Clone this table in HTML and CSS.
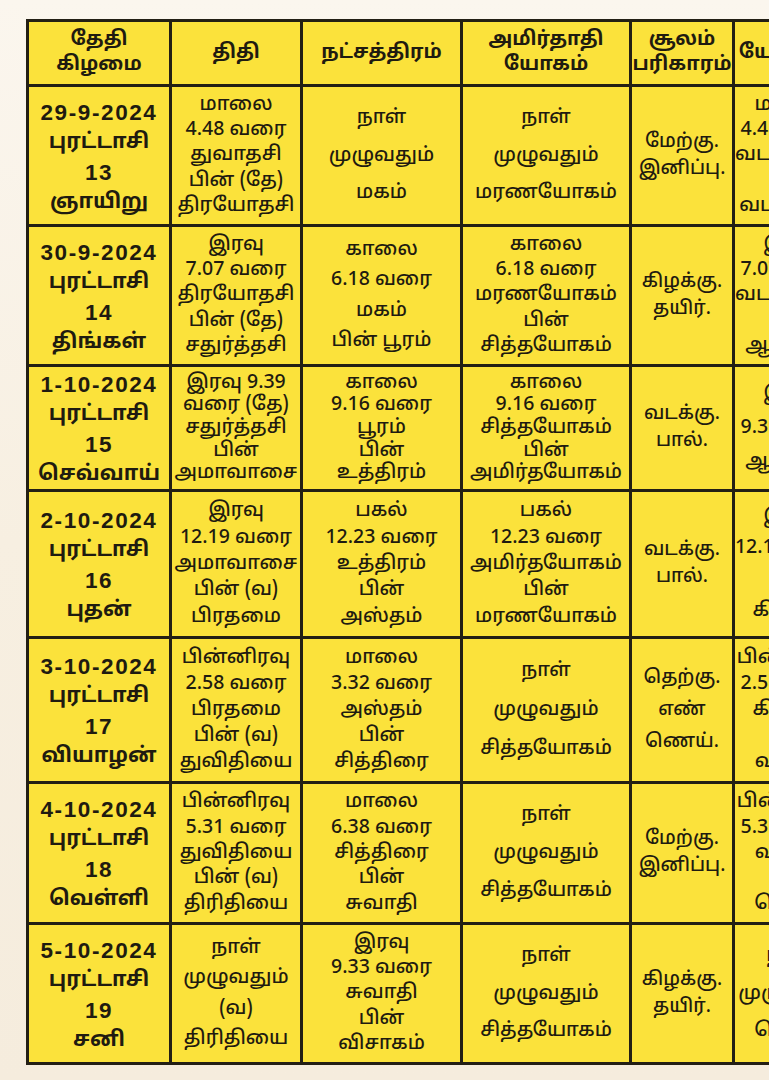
FILE: index.html
```html
<!DOCTYPE html>
<html lang="ta">
<head>
<meta charset="utf-8">
<title>பஞ்சாங்கம்</title>
<link rel="stylesheet" href="styles.css">
</head>
<body>
<div class="page">
  <div class="grid">
    <div class="cell head"><span>தேதி</span><span>கிழமை</span></div>
    <div class="cell head"><span>திதி</span></div>
    <div class="cell head"><span>நட்சத்திரம்</span></div>
    <div class="cell head"><span>அமிர்தாதி</span><span>யோகம்</span></div>
    <div class="cell head"><span>சூலம்</span><span>பரிகாரம்</span></div>
    <div class="cell head last"><span>யோகினி</span></div>

    <div class="cell date"><b>29-9-2024</b><span>புரட்டாசி</span><b>13</b><span>ஞாயிறு</span></div>
    <div class="cell"><span>மாலை</span><span>4.48 வரை</span><span>துவாதசி</span><span>பின் (தே)</span><span>திரயோதசி</span></div>
    <div class="cell"><span>நாள்</span><span>முழுவதும்</span><span>மகம்</span></div>
    <div class="cell"><span>நாள்</span><span>முழுவதும்</span><span>மரணயோகம்</span></div>
    <div class="cell tight"><span>மேற்கு.</span><span>இனிப்பு.</span></div>
    <div class="cell last"><span>மாலை</span><span>4.48 வரை</span><span>வடகிழக்கு</span><span>பின்</span><span>வடமேற்கு</span></div>

    <div class="cell date"><b>30-9-2024</b><span>புரட்டாசி</span><b>14</b><span>திங்கள்</span></div>
    <div class="cell"><span>இரவு</span><span>7.07 வரை</span><span>திரயோதசி</span><span>பின் (தே)</span><span>சதுர்த்தசி</span></div>
    <div class="cell"><span>காலை</span><span>6.18 வரை</span><span>மகம்</span><span>பின் பூரம்</span></div>
    <div class="cell"><span>காலை</span><span>6.18 வரை</span><span>மரணயோகம்</span><span>பின்</span><span>சித்தயோகம்</span></div>
    <div class="cell tight"><span>கிழக்கு.</span><span>தயிர்.</span></div>
    <div class="cell last"><span>இரவு</span><span>7.07 வரை</span><span>வடகிழக்கு</span><span>பின்</span><span>ஆகாயம்</span></div>

    <div class="cell date"><b>1-10-2024</b><span>புரட்டாசி</span><b>15</b><span>செவ்வாய்</span></div>
    <div class="cell"><span>இரவு 9.39</span><span>வரை (தே)</span><span>சதுர்த்தசி</span><span>பின்</span><span>அமாவாசை</span></div>
    <div class="cell"><span>காலை</span><span>9.16 வரை</span><span>பூரம்</span><span>பின்</span><span>உத்திரம்</span></div>
    <div class="cell"><span>காலை</span><span>9.16 வரை</span><span>சித்தயோகம்</span><span>பின்</span><span>அமிர்தயோகம்</span></div>
    <div class="cell tight"><span>வடக்கு.</span><span>பால்.</span></div>
    <div class="cell last"><span>இரவு</span><span>9.39 வரை</span><span>ஆகாயம்</span></div>

    <div class="cell date"><b>2-10-2024</b><span>புரட்டாசி</span><b>16</b><span>புதன்</span></div>
    <div class="cell"><span>இரவு</span><span>12.19 வரை</span><span>அமாவாசை</span><span>பின் (வ)</span><span>பிரதமை</span></div>
    <div class="cell"><span>பகல்</span><span>12.23 வரை</span><span>உத்திரம்</span><span>பின்</span><span>அஸ்தம்</span></div>
    <div class="cell"><span>பகல்</span><span>12.23 வரை</span><span>அமிர்தயோகம்</span><span>பின்</span><span>மரணயோகம்</span></div>
    <div class="cell tight"><span>வடக்கு.</span><span>பால்.</span></div>
    <div class="cell last"><span>இரவு</span><span>12.19 வரை</span><span>பூமி</span><span>கிழக்கு</span></div>

    <div class="cell date"><b>3-10-2024</b><span>புரட்டாசி</span><b>17</b><span>வியாழன்</span></div>
    <div class="cell"><span>பின்னிரவு</span><span>2.58 வரை</span><span>பிரதமை</span><span>பின் (வ)</span><span>துவிதியை</span></div>
    <div class="cell"><span>மாலை</span><span>3.32 வரை</span><span>அஸ்தம்</span><span>பின்</span><span>சித்திரை</span></div>
    <div class="cell"><span>நாள்</span><span>முழுவதும்</span><span>சித்தயோகம்</span></div>
    <div class="cell tight wide"><span>தெற்கு.</span><span>எண்</span><span>ணெய்.</span></div>
    <div class="cell last"><span>பின்னிரவு</span><span>2.58 வரை</span><span>கிழக்கு</span><span>பின்</span><span>வடக்கு</span></div>

    <div class="cell date"><b>4-10-2024</b><span>புரட்டாசி</span><b>18</b><span>வெள்ளி</span></div>
    <div class="cell"><span>பின்னிரவு</span><span>5.31 வரை</span><span>துவிதியை</span><span>பின் (வ)</span><span>திரிதியை</span></div>
    <div class="cell"><span>மாலை</span><span>6.38 வரை</span><span>சித்திரை</span><span>பின்</span><span>சுவாதி</span></div>
    <div class="cell"><span>நாள்</span><span>முழுவதும்</span><span>சித்தயோகம்</span></div>
    <div class="cell tight"><span>மேற்கு.</span><span>இனிப்பு.</span></div>
    <div class="cell last"><span>பின்னிரவு</span><span>5.31 வரை</span><span>வடக்கு</span><span>பின்</span><span>தெற்கு</span></div>

    <div class="cell date"><b>5-10-2024</b><span>புரட்டாசி</span><b>19</b><span>சனி</span></div>
    <div class="cell"><span>நாள்</span><span>முழுவதும்</span><span>(வ)</span><span>திரிதியை</span></div>
    <div class="cell"><span>இரவு</span><span>9.33 வரை</span><span>சுவாதி</span><span>பின்</span><span>விசாகம்</span></div>
    <div class="cell"><span>நாள்</span><span>முழுவதும்</span><span>சித்தயோகம்</span></div>
    <div class="cell tight"><span>கிழக்கு.</span><span>தயிர்.</span></div>
    <div class="cell last"><span>நாள்</span><span>முழுவதும்</span><span>தெற்கு</span></div>
  </div>
</div>
</body>
</html>
```

FILE: styles.css
```css
html, body {
  margin: 0;
  padding: 0;
  overflow: hidden;
  height: 100%;
}
body {
  background: linear-gradient(180deg, #fbf6ee 0%, #f7efe1 50%, #f5ecdd 100%);
  font-family: "Noto Sans Tamil", "Lohit Tamil", "Noto Sans", "Liberation Sans", sans-serif;
  color: #1f1b10;
}
.page {
  width: 769px;
  height: 1080px;
  overflow: hidden;
  padding: 19px 0 0 26px;
  box-sizing: border-box;
}
.grid {
  display: grid;
  grid-template-columns: 140px 128px 157px 166px 100px 112px;
  grid-template-rows: 62px 137px 137px 122px 144px 142px 138px 137px;
  gap: 3px;
  padding: 3px;
  background: #231f14;
  width: max-content;
}
.cell {
  background: #fbe23b;
  display: flex;
  flex-direction: column;
  justify-content: space-evenly;
  align-items: center;
  text-align: center;
  font-size: 19.5px;
  font-weight: 500;
  line-height: 22px;
  padding: 4px 0;
  white-space: nowrap;
  overflow: hidden;
}
.cell.tight {
  justify-content: center;
  line-height: 27px;
  font-size: 19px;
}
.cell.tight.wide {
  line-height: 32px;
}
.head {
  font-weight: 700;
  font-size: 19.5px;
  line-height: 25px;
  justify-content: center;
  padding: 2px 0;
}
.date {
  font-weight: 700;
  font-size: 21px;
  justify-content: center;
  gap: 8px;
  padding-top: 8px;
}
.date b {
  font-family: "Liberation Sans", Arial, sans-serif;
  font-size: 22.5px;
  letter-spacing: 1.6px;
  line-height: 22px;
}
```
